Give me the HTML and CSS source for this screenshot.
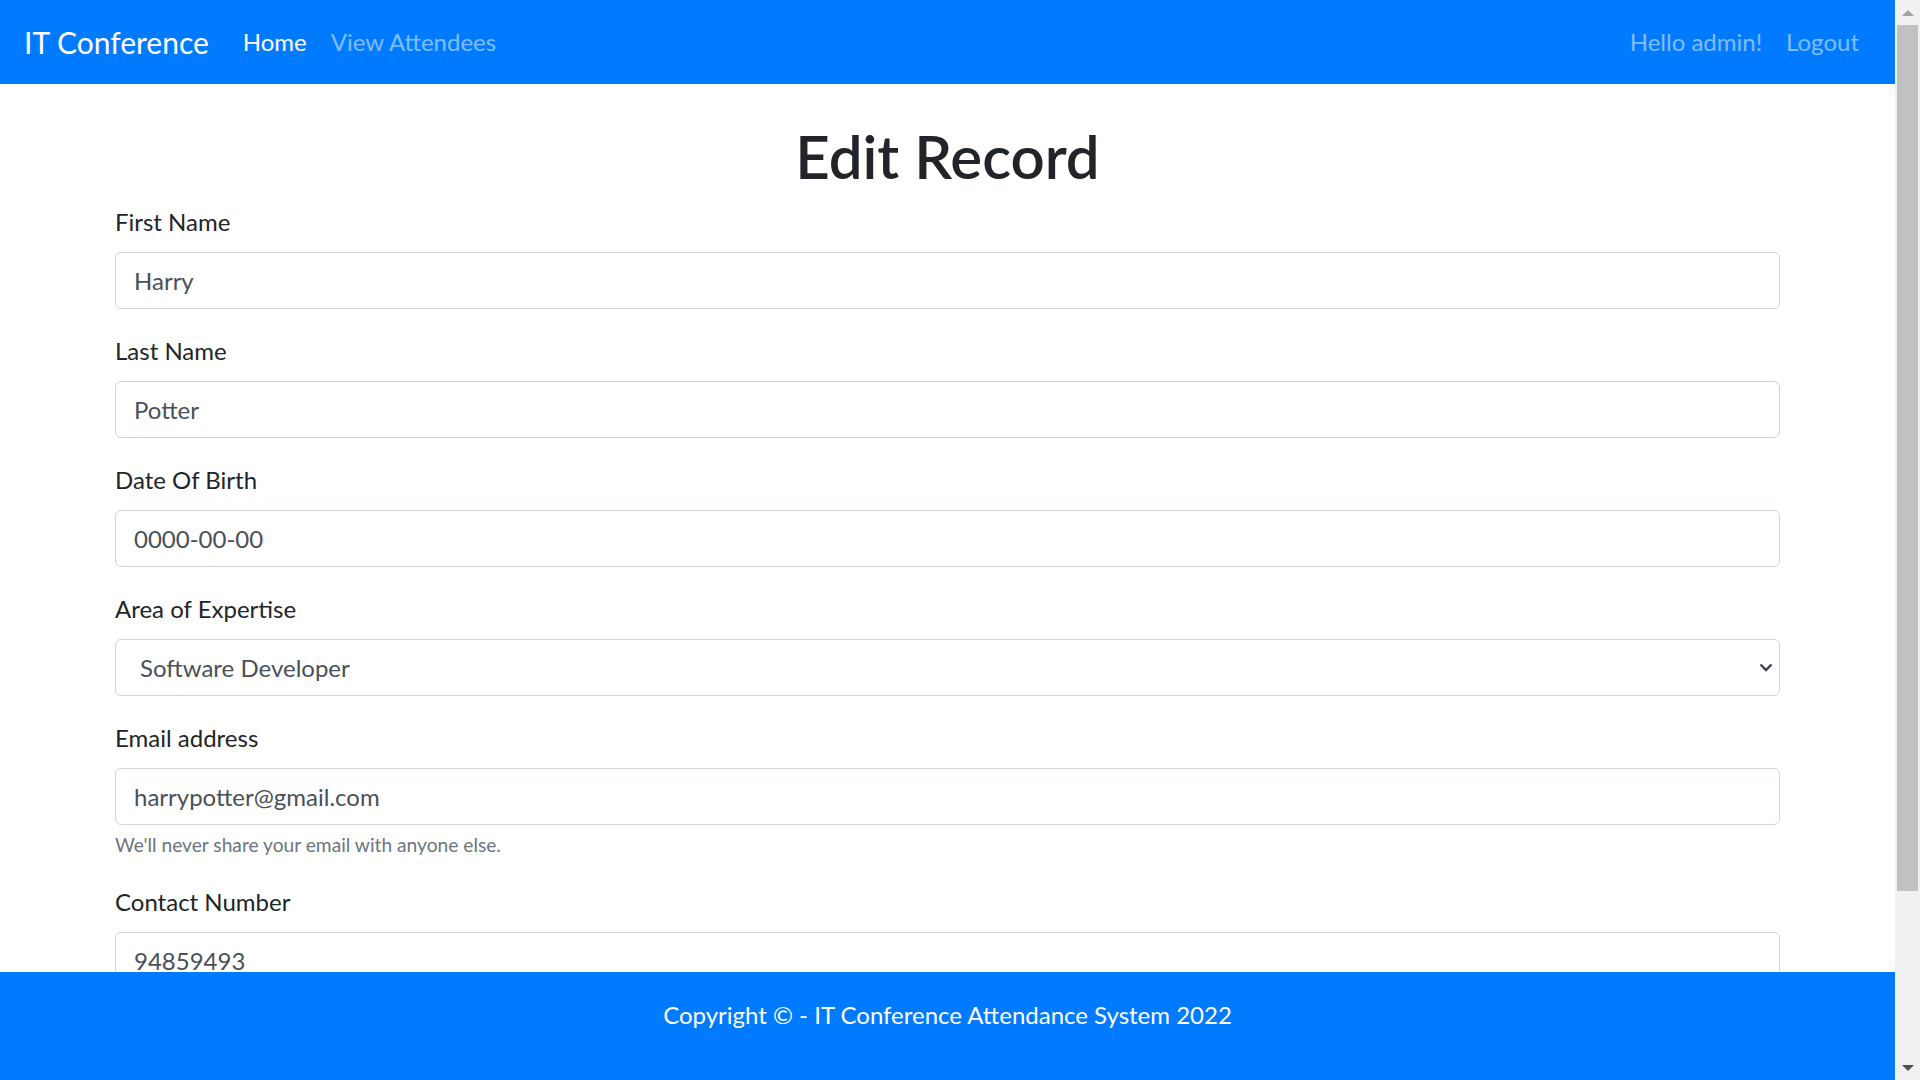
FILE: index.html
```html
<!DOCTYPE html>
<html lang="en">
<head>
<meta charset="utf-8">
<title>Edit Record</title>
<link rel="stylesheet" href="styles.css">
</head>
<body>
<div class="page">
  <nav class="navbar">
    <a class="brand" href="#">IT Conference</a>
    <ul class="nav">
      <li><a class="nav-link active" href="#">Home</a></li>
      <li><a class="nav-link" href="#">View Attendees</a></li>
    </ul>
    <ul class="nav nav-right">
      <li><a class="nav-link" href="#">Hello admin!</a></li>
      <li><a class="nav-link" href="#">Logout</a></li>
    </ul>
  </nav>
  <main class="main">
    <div class="container">
      <h1 class="title">Edit Record</h1>
      <form>
        <div class="form-group">
          <label class="label">First Name</label>
          <input class="input" type="text" value="Harry">
        </div>
        <div class="form-group">
          <label class="label">Last Name</label>
          <input class="input" type="text" value="Potter">
        </div>
        <div class="form-group">
          <label class="label">Date Of Birth</label>
          <input class="input" type="text" value="0000-00-00">
        </div>
        <div class="form-group">
          <label class="label">Area of Expertise</label>
          <div class="select-wrap">
            <select class="input select">
              <option selected>Software Developer</option>
              <option>Database Administrator</option>
              <option>Network Engineer</option>
            </select>
            <svg class="chevron" width="14" height="9" viewBox="0 0 14 9"><path d="M1.5 1.5 L7 7 L12.5 1.5" fill="none" stroke="#3b4046" stroke-width="2.4"/></svg>
          </div>
        </div>
        <div class="form-group">
          <label class="label">Email address</label>
          <input class="input" type="text" value="harrypotter@gmail.com">
          <small class="help">We'll never share your email with anyone else.</small>
        </div>
        <div class="form-group">
          <label class="label">Contact Number</label>
          <input class="input" type="text" value="94859493">
        </div>
      </form>
    </div>
  </main>
  <footer class="footer">Copyright &copy; - IT Conference Attendance System 2022</footer>
</div>
<div class="scrollbar">
  <div class="sb-btn"><span class="arrow-up"></span></div>
  <div class="sb-track"><div class="sb-thumb"></div></div>
  <div class="sb-btn"><span class="arrow-down"></span></div>
</div>
</body>
</html>
```
FILE: styles.css
```css
* { box-sizing: border-box; }
html, body { height: 100%; }
body {
  margin: 0;
  display: flex;
  overflow: hidden;
  font-family: "Lato", "Open Sans", sans-serif;
  font-size: 24px;
  line-height: 1.5;
  color: #212529;
  background: #fff;
}
.page {
  flex: 1;
  min-width: 0;
  display: flex;
  flex-direction: column;
  height: 100vh;
}
.navbar {
  height: 84px;
  flex: none;
  background: #007bff;
  display: flex;
  align-items: center;
  padding: 12px 24px;
}
.brand {
  font-size: 30px;
  line-height: 45px;
  padding: 7.5px 0;
  margin-right: 22px;
  color: #fff;
  text-decoration: none;
}
.nav {
  list-style: none;
  margin: 0;
  padding: 0;
  display: flex;
}
.nav-right { margin-left: auto; }
.nav-link {
  display: block;
  padding: 12px 12px;
  line-height: 36px;
  color: rgba(255,255,255,.5);
  text-decoration: none;
}
.nav-link.active { color: #fff; }
.main {
  flex: 1;
  overflow: hidden;
  min-height: 0;
}
.container {
  max-width: 1710px;
  margin: 0 auto;
  padding: 36px 22.5px 0;
}
.title {
  text-align: center;
  font-size: 60px;
  line-height: 72px;
  font-weight: 600;
  margin: 0 0 12px;
}
.form-group { margin-bottom: 24px; }
.label {
  display: inline-block;
  margin-bottom: 12px;
  line-height: 36px;
}
.input {
  display: block;
  width: 100%;
  height: 57px;
  padding: 9px 18px;
  font-family: inherit;
  font-size: 24px;
  line-height: 36px;
  color: #495057;
  background: #fff;
  border: 1px solid #ced4da;
  border-radius: 6px;
}
.select-wrap { position: relative; }
.select {
  appearance: none;
  -webkit-appearance: none;
  padding-left: 24px;
}
.chevron {
  position: absolute;
  right: 7px;
  top: 24px;
  pointer-events: none;
}
.help {
  display: block;
  margin-top: 6px;
  font-size: 19.2px;
  line-height: 28.8px;
  color: #6c757d;
}
.footer {
  flex: none;
  height: 108px;
  padding-top: 25px;
  background: #007bff;
  color: #fff;
  text-align: center;
  line-height: 36px;
}
.scrollbar {
  width: 25px;
  flex: none;
  height: 100vh;
  background: #f1f1f1;
  display: flex;
  flex-direction: column;
}
.sb-btn {
  height: 25px;
  flex: none;
  display: flex;
  align-items: center;
  justify-content: center;
}
.arrow-up {
  width: 0; height: 0;
  border-left: 6px solid transparent;
  border-right: 6px solid transparent;
  border-bottom: 6px solid #a3a3a3;
}
.arrow-down {
  width: 0; height: 0;
  border-left: 6px solid transparent;
  border-right: 6px solid transparent;
  border-top: 6px solid #505050;
}
.sb-track {
  flex: 1;
  padding: 0 2px;
}
.sb-thumb {
  height: 866px;
  background: #c1c1c1;
}
```
